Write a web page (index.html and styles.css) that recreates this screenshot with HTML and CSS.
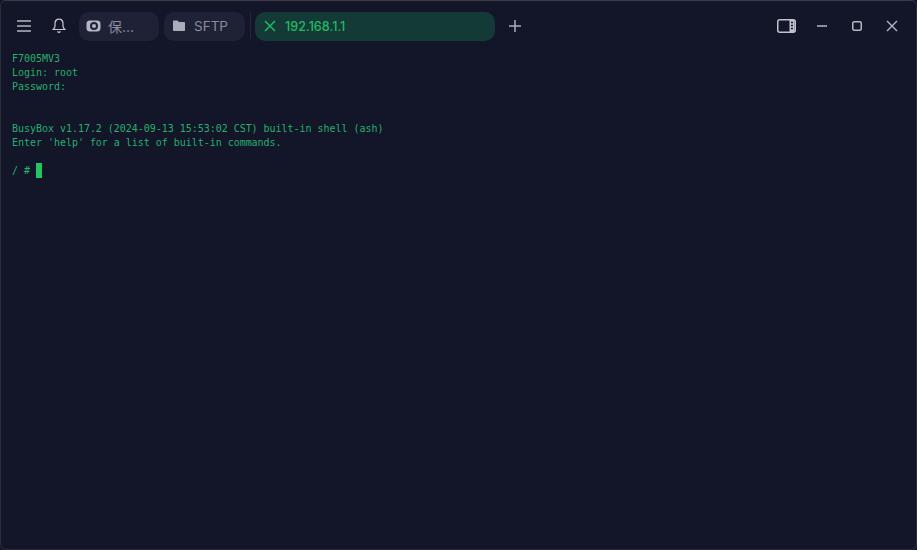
FILE: index.html
```html
<!DOCTYPE html>
<html lang="zh">
<head>
<meta charset="utf-8">
<title>192.168.1.1</title>
<link rel="stylesheet" href="styles.css">
</head>
<body>
<div class="window">
  <header class="titlebar">
    <button class="icon-btn menu" aria-label="menu">
      <svg width="16" height="14" viewBox="0 0 16 14"><path d="M1 2h14M1 7h14M1 12h14" stroke="#b4b7c4" stroke-width="1.5" fill="none"/></svg>
    </button>
    <button class="icon-btn bell" aria-label="notifications">
      <svg width="14" height="16" viewBox="0 0 14 16"><path d="M7 1.200c-2.500 0-4 2-4 4.300v2.600c0 1.400-.8 2.400-1.800 3.400h11.600c-1-1-1.800-2-1.800-3.400V5.500c0-2.300-1.500-4.300-4-4.300z" fill="none" stroke="#c4c6d2" stroke-width="1.200"/><path d="M5.600 13.300c.3.8.8 1.200 1.400 1.200s1.100-.4 1.400-1.200" fill="none" stroke="#c4c6d2" stroke-width="1.200"/></svg>
    </button>
    <div class="tab tab-save">
      <svg class="tab-icon" width="15" height="14" viewBox="0 0 15 14"><path fill-rule="evenodd" d="M3.500 1.500h8c1.600 0 2.800 1.300 3 2.800v5.400c-.2 1.500-1.400 2.800-3 2.800h-8c-1.600 0-2.800-1.300-3-2.800V4.300c.2-1.500 1.400-2.800 3-2.800zM8 3a4 4 0 1 0 0 8 4 4 0 0 0 0-8z" fill="#b4b6c3"/><circle cx="8" cy="7" r="2" fill="#b4b6c3"/></svg>
      <span class="tab-label">保...</span>
    </div>
    <div class="tab tab-sftp">
      <svg class="tab-icon" width="14" height="12" viewBox="0 0 14 12"><path d="M1 1.500c0-.5.4-1 1-1h3.500l1.500 1.500h5c.6 0 1 .5 1 1v7c0 .6-.4 1-1 1H2c-.6 0-1-.4-1-1z" fill="#a9acba"/></svg>
      <span class="tab-label">SFTP</span>
    </div>
    <div class="divider"></div>
    <div class="tab tab-active">
      <svg class="tab-close" width="12" height="12" viewBox="0 0 12 12"><path d="M1 1l10 10M11 1L1 11" stroke="#22b864" stroke-width="1.500" fill="none"/></svg>
      <span class="tab-label">192.168.1.1</span>
    </div>
    <button class="icon-btn plus" aria-label="new tab">
      <svg width="14" height="14" viewBox="0 0 14 14"><path d="M7 1v12M1 7h12" stroke="#a9acba" stroke-width="1.500" fill="none"/></svg>
    </button>
    <div class="window-controls">
      <svg class="ctl-panel" width="19" height="14" viewBox="0 0 19 14"><rect x=".75" y=".75" width="17.500" height="12.500" rx="2" fill="none" stroke="#c0c2ce" stroke-width="1.500"/><path d="M12.500 1h5v12h-5z" fill="#c0c2ce"/><path d="M14 3.500h2M14 6.500h2M14 9.500h2" stroke="#14172a" stroke-width="1.300"/></svg>
      <svg class="ctl-min" width="12" height="12" viewBox="0 0 12 12"><path d="M1 6h10" stroke="#b4b7c4" stroke-width="1.500"/></svg>
      <svg class="ctl-max" width="12" height="12" viewBox="0 0 12 12"><rect x="1.750" y="1.750" width="8.500" height="8.500" rx="1.500" fill="none" stroke="#b4b7c4" stroke-width="1.500"/></svg>
      <svg class="ctl-close" width="12" height="12" viewBox="0 0 12 12"><path d="M1 1l10 10M11 1L1 11" stroke="#b4b7c4" stroke-width="1.400" fill="none"/></svg>
    </div>
  </header>
  <main class="terminal">
    <div class="line">F7005MV3</div>
    <div class="line">Login: root</div>
    <div class="line">Password:</div>
    <div class="line"> </div>
    <div class="line"> </div>
    <div class="line">BusyBox v1.17.2 (2024-09-13 15:53:02 CST) built-in shell (ash)</div>
    <div class="line">Enter 'help' for a list of built-in commands.</div>
    <div class="line"> </div>
    <div class="line prompt"><span>/ # </span><span class="cursor"></span></div>
  </main>
</div>
</body>
</html>
```
FILE: styles.css
```css
* { box-sizing: border-box; }
html, body { margin: 0; height: 100%; background: #13152a; overflow: hidden; }
button { background: none; border: 0; padding: 0; display: flex; align-items: center; justify-content: center; }

.window {
  width: 917px;
  height: 550px;
  display: flex;
  flex-direction: column;
  background: #131528;
  border: 1px solid #2a2c38;
  border-top: 1px solid #3a3c44;
  border-radius: 6px;
}

.titlebar {
  display: flex;
  align-items: center;
  height: 50px;
  padding: 0 0 0 15px;
  flex: none;
}
.icon-btn { flex: none; }
.menu { width: 16px; height: 14px; }
.bell { width: 14px; height: 16px; margin-left: 20px; margin-right: 13px; }

.tab {
  height: 29px;
  border-radius: 10px;
  display: flex;
  align-items: center;
  font-family: "Inter", "Noto Sans CJK SC", sans-serif;
  font-size: 13px;
  color: #8a8c98;
  background: #1f2136;
  flex: none;
}
.tab-save { width: 80px; padding-left: 7px; gap: 7px; }
.tab-save .tab-label { font-size: 14px; }
.tab-sftp { width: 81px; margin-left: 5px; padding-left: 8px; gap: 8px; }
.tab-sftp .tab-label { font-size: 13.500px; }
.divider { width: 1px; height: 26px; background: #242738; margin: 0 4px 0 5px; flex: none; }
.tab-active {
  width: 240px;
  background: #143a38;
  color: #22b864;
  padding-left: 9px;
  gap: 9px;
  font-size: 12.600px;
  font-weight: 500;
}
.plus { width: 14px; height: 14px; margin-left: 13px; }

.window-controls {
  margin-left: auto;
  display: flex;
  align-items: center;
  padding-right: 18px;
}
.ctl-panel { margin-right: 20px; }
.ctl-min { margin-right: 23px; }
.ctl-max { margin-right: 23px; }

.terminal {
  flex: 1;
  padding: 1px 0 0 11px;
  font-family: "DejaVu Sans Mono", monospace;
  font-size: 10px;
  line-height: 14px;
  letter-spacing: -0.03px;
  color: #26b06c;
}
.line { height: 14px; white-space: pre; }
.prompt { display: flex; align-items: center; }
.cursor {
  display: block;
  width: 6px;
  height: 15px;
  margin-top: -2px;
  background: #22c55e;
}
```
